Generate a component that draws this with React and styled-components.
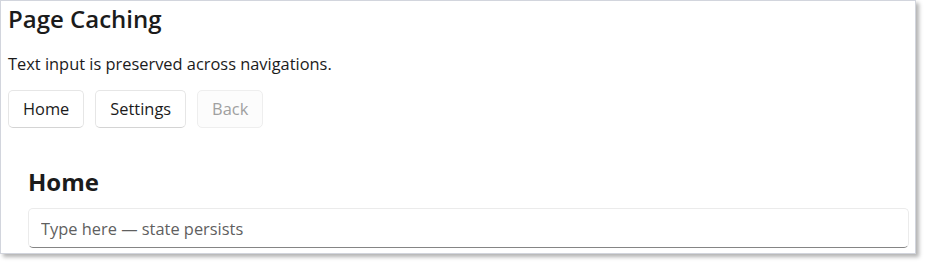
import React, { useState } from 'react';
import styled, { createGlobalStyle } from 'styled-components';

const GlobalStyle = createGlobalStyle`
  html, body {
    margin: 0;
    padding: 0;
    background: #ffffff;
    min-height: 265px;
  }
  body {
    font-family: "Open Sans", "Noto Sans", sans-serif;
    color: #1b1b1b;
  }
`;

const Window = styled.div`
  box-sizing: border-box;
  width: 916px;
  height: 254px;
  background: #ffffff;
  border: 1px solid #d2d5dd;
  box-shadow: 3px 3px 4px rgba(0, 0, 0, 0.3);
  overflow: hidden;
`;

const Content = styled.div`
  display: flex;
  flex-direction: column;
  align-items: flex-start;
  padding: 2px 7px 0 7px;
`;

const Title = styled.h1`
  margin: 0;
  font-size: 24px;
  line-height: 32px;
  font-weight: 600;
`;

const Description = styled.p`
  margin: 18px 0 0 0;
  font-size: 16.4px;
  line-height: 22px;
`;

const ButtonRow = styled.div`
  display: flex;
  gap: 11px;
  margin-top: 15px;
`;

const NavButton = styled.button`
  box-sizing: border-box;
  height: 38px;
  padding: 0 14px;
  font-family: inherit;
  font-size: 16.4px;
  line-height: 22px;
  color: ${p => (p.disabled ? '#a0a0a0' : '#1b1b1b')};
  background: ${p => (p.disabled ? '#fcfcfc' : '#ffffff')};
  border: 1px solid ${p => (p.disabled ? '#eeeeee' : '#e6e6e6')};
  border-bottom-color: ${p => (p.disabled ? '#eeeeee' : '#d4d4d4')};
  border-radius: 5px;
  cursor: ${p => (p.disabled ? 'default' : 'pointer')};
`;

const Page = styled.section`
  display: flex;
  flex-direction: column;
  align-self: stretch;
  padding: 0 0 0 20px;
  margin-top: 38px;
`;

const PageHeading = styled.h2`
  margin: 0;
  font-size: 24px;
  line-height: 32px;
  font-weight: 700;
`;

const TextField = styled.input`
  box-sizing: border-box;
  width: 881px;
  height: 40px;
  margin-top: 10px;
  padding: 0 12px;
  font-family: inherit;
  font-size: 16.4px;
  color: #1b1b1b;
  background: #ffffff;
  border: 1px solid #ebebeb;
  border-bottom: 1px solid #858585;
  border-radius: 5px;
  outline: none;

  &::placeholder {
    color: #5f5f5f;
  }
`;

export default function App() {
  const [text, setText] = useState('');
  return (
    <>
      <GlobalStyle />
      <Window>
        <Content>
          <Title>Page Caching</Title>
          <Description>Text input is preserved across navigations.</Description>
          <ButtonRow>
            <NavButton>Home</NavButton>
            <NavButton>Settings</NavButton>
            <NavButton disabled>Back</NavButton>
          </ButtonRow>
          <Page>
            <PageHeading>Home</PageHeading>
            <TextField
              value={text}
              onChange={e => setText(e.target.value)}
              placeholder="Type here — state persists"
            />
          </Page>
        </Content>
      </Window>
    </>
  );
}
